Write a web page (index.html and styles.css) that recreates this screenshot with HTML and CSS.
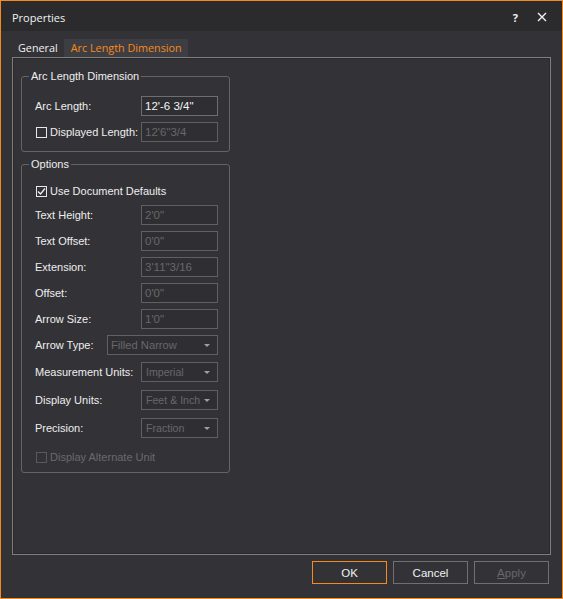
FILE: index.html
```html
<!DOCTYPE html>
<html>
<head>
<meta charset="utf-8">
<title>Properties</title>
<link rel="stylesheet" href="styles.css">
</head>
<body>
<div class="window">
  <div class="titlebar">
    <span class="title">Properties</span>
    <span class="tb-btn help">?</span>
    <span class="tb-btn close">
      <svg width="10" height="10" viewBox="0 0 10 10"><path d="M1 1L9 9M9 1L1 9" stroke="#f1f1f1" stroke-width="1.4" fill="none"/></svg>
    </span>
  </div>
  <div class="tabs">
    <div class="tab">General</div>
    <div class="tab active">Arc Length Dimension</div>
  </div>
  <div class="panel">
    <div class="group g1">
      <div class="legend">Arc Length Dimension</div>
      <div class="row first">
        <span class="label">Arc Length:</span>
        <span class="field">12'-6 3/4"</span>
      </div>
      <div class="row">
        <span class="check"></span>
        <span class="label">Displayed Length:</span>
        <span class="field disabled">12'6"3/4</span>
      </div>
    </div>
    <div class="group g2">
      <div class="legend">Options</div>
      <div class="row first">
        <span class="check checked"><svg width="9" height="9" viewBox="0 0 9 9"><path d="M1 4.5L3.5 7L8 1.5" stroke="#f1f1f1" stroke-width="1.3" fill="none"/></svg></span>
        <span class="label">Use Document Defaults</span>
      </div>
      <div class="row r-th">
        <span class="label dim">Text Height:</span>
        <span class="field disabled">2'0"</span>
      </div>
      <div class="row">
        <span class="label dim">Text Offset:</span>
        <span class="field disabled">0'0"</span>
      </div>
      <div class="row">
        <span class="label dim">Extension:</span>
        <span class="field disabled">3'11"3/16</span>
      </div>
      <div class="row">
        <span class="label dim">Offset:</span>
        <span class="field disabled">0'0"</span>
      </div>
      <div class="row">
        <span class="label dim">Arrow Size:</span>
        <span class="field disabled">1'0"</span>
      </div>
      <div class="row">
        <span class="label dim">Arrow Type:</span>
        <span class="combo wide"><span class="ctext">Filled Narrow</span><span class="arrow"></span></span>
      </div>
      <div class="row r7">
        <span class="label dim">Measurement Units:</span>
        <span class="combo"><span class="ctext">Imperial</span><span class="arrow"></span></span>
      </div>
      <div class="row r8">
        <span class="label dim">Display Units:</span>
        <span class="combo"><span class="ctext">Feet &amp; Inch</span><span class="arrow"></span></span>
      </div>
      <div class="row r8">
        <span class="label dim">Precision:</span>
        <span class="combo"><span class="ctext">Fraction</span><span class="arrow"></span></span>
      </div>
      <div class="row r-alt">
        <span class="check off"></span>
        <span class="label off">Display Alternate Unit</span>
      </div>
    </div>
  </div>
  <div class="buttons">
    <span class="btn ok">OK</span>
    <span class="btn">Cancel</span>
    <span class="btn off"><u>A</u>pply</span>
  </div>
</div>
</body>
</html>
```
FILE: styles.css
```css
html, body {
  margin: 0;
  padding: 0;
  background: #333337;
}
.window {
  width: 563px;
  height: 599px;
  box-sizing: border-box;
  border: 1px solid #f58a1f;
  background: #333337;
  display: flex;
  flex-direction: column;
  font-family: "Liberation Sans", Arial, sans-serif;
  font-size: 11px;
  color: #eeeeee;
}
.titlebar {
  height: 30px;
  flex: none;
  background: #2b2b2e;
  display: flex;
  align-items: center;
  padding: 2px 0 0 11px;
  box-sizing: border-box;
}
.title {
  font-family: "Open Sans", sans-serif;
  font-size: 11px;
  color: #f1f1f1;
  flex: 1;
}
.tb-btn {
  font-family: "Open Sans", sans-serif;
  font-size: 11px;
  font-weight: bold;
  color: #f1f1f1;
  display: flex;
  align-items: center;
}
.help {
  margin-right: 19px;
}
.close {
  margin-right: 15px;
}
.tabs {
  flex: none;
  display: flex;
  align-items: flex-end;
  height: 18px;
  margin: 8px 0 0 11px;
  font-family: "Open Sans", sans-serif;
  font-size: 10.8px;
}
.tab {
  height: 18px;
  line-height: 18px;
  padding: 0 5px 0 6px;
  color: #f1f1f1;
}
.tab.active {
  margin-left: 1px;
  padding: 0 6px 0 7px;
  background: #3e3e42;
  color: #f58a1f;
}
.panel {
  flex: none;
  margin-left: 11px;
  width: 539px;
  height: 498px;
  box-sizing: border-box;
  border: 1px solid #7e7e7e;
  box-shadow: inset 1px 1px 0 #2a2a2d, inset -1px -1px 0 #2a2a2d;
  padding: 18px 0 0 8px;
}
.group {
  width: 209px;
  box-sizing: border-box;
  border: 1px solid #646464;
  border-radius: 3px;
  padding: 0 11px 0 13px;
}
.g1 {
  height: 76px;
}
.g2 {
  margin-top: 12px;
  height: 309px;
}
.legend {
  display: block;
  width: max-content;
  margin: -7px 0 0 -6px;
  padding: 0 2px;
  height: 13px;
  line-height: 13px;
  background: #333337;
  color: #eeeeee;
}
.row {
  display: flex;
  align-items: center;
  height: 20px;
  margin-top: 6px;
}
.g1 .row.first {
  margin-top: 13px;
}
.g2 .row.first {
  margin-top: 10px;
}
.row.r-th {
  margin-top: 4px;
}
.row.r7 {
  margin-top: 7px;
}
.row.r8 {
  margin-top: 8px;
}
.row.r-alt {
  margin-top: 9px;
}
.label {
  flex: 1;
  white-space: nowrap;
  color: #eeeeee;
}
.label.off {
  color: #6a6a6a;
}
.check {
  width: 11px;
  height: 11px;
  box-sizing: border-box;
  border: 1px solid #e8e8e8;
  margin: 0 3px 0 1px;
  display: flex;
  align-items: center;
  justify-content: center;
  flex: none;
}
.check.off {
  border-color: #5a5a5a;
}
.field, .combo {
  width: 77px;
  height: 20px;
  box-sizing: border-box;
  border: 1px solid #6e6e6e;
  background: #2f2f33;
  padding: 0 3px;
  display: flex;
  align-items: center;
  flex: none;
  font-size: 11.5px;
  color: #f4f4f4;
  white-space: nowrap;
  overflow: hidden;
}
.field.disabled {
  color: #686868;
  border-color: #606060;
}
.combo {
  border-color: #606060;
  color: #686868;
  padding: 0 4px 0 4px;
  font-size: 10.6px;
}
.combo.wide {
  width: 111px;
  padding-left: 3px;
  font-size: 11.2px;
}
.ctext {
  flex: 1;
  overflow: hidden;
}
.arrow {
  width: 0;
  height: 0;
  border-left: 3px solid transparent;
  border-right: 3px solid transparent;
  border-top: 3px solid #a0a0a0;
  margin: 0 3px 0 2px;
  flex: none;
}
.buttons {
  flex: none;
  display: flex;
  justify-content: flex-end;
  gap: 6px;
  margin: 6px 13px 0 0;
}
.btn {
  width: 75px;
  height: 23px;
  box-sizing: border-box;
  border: 1px solid #707070;
  display: flex;
  align-items: center;
  justify-content: center;
  font-size: 11.5px;
  color: #f1f1f1;
}
.btn.ok {
  border-color: #f58a1f;
}
.btn.off {
  color: #686868;
}
```
